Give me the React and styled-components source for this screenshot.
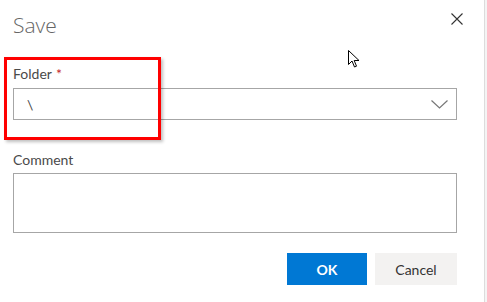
import React from "react";
import styled, { createGlobalStyle } from "styled-components";

const Global = createGlobalStyle`
  html, body { margin: 0; padding: 0; background: #fff; }
  body { font-family: "Segoe UI", Lato, "Open Sans", sans-serif; color: #333; }
`;

const Page = styled.div`
  display: flex;
  width: 487px;
  height: 302px;
  overflow: hidden;
  position: relative;
`;

const Dialog = styled.div`
  width: 484px;
  height: 302px;
  box-sizing: border-box;
  padding: 0 27px 0 13px;
  display: flex;
  flex-direction: column;
  background: #fff;
`;

const Edge = styled.div`
  width: 3px;
  height: 302px;
  border-left: 1px solid #dcdcdc;
  background: #f4f4f4;
  box-sizing: border-box;
`;

const Header = styled.div`
  display: flex;
  justify-content: space-between;
  align-items: flex-start;
  height: 58px;
`;

const Title = styled.div`
  font-family: "Segoe UI Light", "Open Sans", Lato, sans-serif;
  font-weight: 300;
  font-size: 21px;
  line-height: 28px;
  margin-top: 11px;
  color: #666;
`;

const Close = styled.button`
  border: 0;
  background: none;
  padding: 0;
  margin: 13px -6px 0 0;
  width: 12px;
  height: 12px;
  display: flex;
  cursor: pointer;
`;

const Label = styled.div`
  font-size: 14px;
  line-height: 20px;
  margin-top: ${(p) => p.$top || 0}px;
  margin-bottom: 4px;
  color: #4a4a4a;
`;

const Star = styled.span`
  color: #c4262e;
  margin-left: 4px;
`;

const Select = styled.div`
  height: 32px;
  box-sizing: border-box;
  border: 1px solid #a6a6a6;
  display: flex;
  align-items: center;
  justify-content: space-between;
  padding: 0 8px 0 13px;
  font-size: 14px;
  color: #444;
`;

const TextArea = styled.div`
  height: 60px;
  box-sizing: border-box;
  border: 1px solid #a6a6a6;
  margin-top: -1px;
`;

const Footer = styled.div`
  display: flex;
  justify-content: flex-end;
  gap: 8px;
  margin-top: 20px;
`;

const Button = styled.button`
  width: ${(p) => (p.$primary ? 80 : 82)}px;
  height: 32px;
  border: 0;
  font-family: "Segoe UI", Lato, "Open Sans", sans-serif;
  font-size: 14px;
  font-weight: ${(p) => (p.$primary ? 700 : 400)};
  background: ${(p) => (p.$primary ? "#0078d4" : "#f3f2f1")};
  color: ${(p) => (p.$primary ? "#fff" : "#333")};
  padding: 0;
`;

const Highlight = styled.div`
  position: absolute;
  left: 4px;
  top: 57px;
  width: 157px;
  height: 83px;
  box-sizing: border-box;
  border: 3px solid #ff0000;
  box-shadow: 2px 2px 3px rgba(0, 0, 0, 0.25);
  pointer-events: none;
`;

const Cursor = styled.svg`
  position: absolute;
  left: 348px;
  top: 50px;
`;

export default function App() {
  return (
    <>
      <Global />
      <Page>
        <Dialog>
          <Header>
            <Title>Save</Title>
            <Close aria-label="Close">
              <svg width="12" height="12" viewBox="0 0 12 12">
                <path d="M0.5 0.5 L11.5 11.5 M11.5 0.5 L0.5 11.5" stroke="#333" strokeWidth="1.1" />
              </svg>
            </Close>
          </Header>
          <Label $top={6}>
            Folder<Star>*</Star>
          </Label>
          <Select>
            <span>\</span>
            <svg width="17" height="9" viewBox="0 0 17 9">
              <path d="M0.5 0.5 L8.5 8 L16.5 0.5" fill="none" stroke="#777" strokeWidth="1.2" />
            </svg>
          </Select>
          <Label $top={30}>Comment</Label>
          <TextArea />
          <Footer>
            <Button $primary>OK</Button>
            <Button>Cancel</Button>
          </Footer>
        </Dialog>
        <Edge />
        <Highlight />
        <Cursor width="13" height="19" viewBox="0 0 13 19">
          <path
            d="M0.5 0.5 L0.5 14.5 L4 11 L6.5 17 L8.5 16.2 L6.2 10.5 L11 10.5 Z"
            fill="#fff"
            stroke="#000"
            strokeWidth="1"
            strokeLinejoin="miter"
          />
        </Cursor>
      </Page>
    </>
  );
}
